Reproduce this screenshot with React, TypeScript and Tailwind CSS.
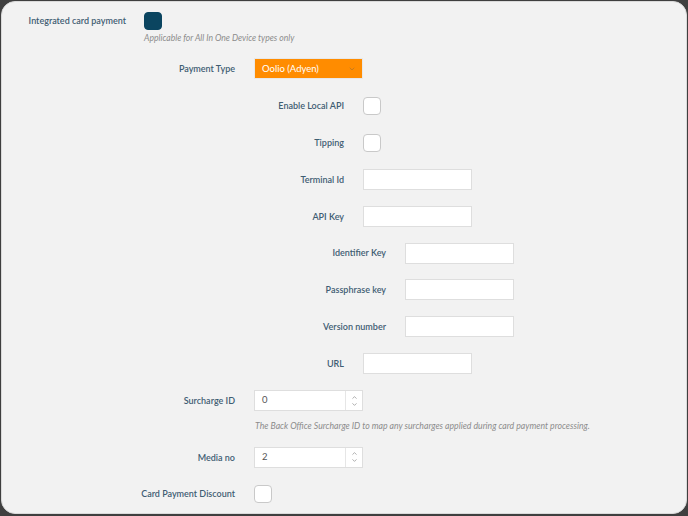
import { ChevronDown, ChevronUp } from 'lucide-react';
import type { ReactNode } from 'react';

function Row({
  labelClass,
  label,
  children,
}: {
  labelClass: string;
  label: string;
  children: ReactNode;
}) {
  return (
    <div className="flex h-[36.85px] items-center">
      <div className={`${labelClass} shrink-0 pr-[19px] text-right`}>{label}</div>
      {children}
    </div>
  );
}

function Checkbox({ checked = false }: { checked?: boolean }) {
  return (
    <div
      className={
        checked
          ? 'h-[18px] w-[18px] rounded-[4px] border border-[#0b4560] bg-[#0b4560]'
          : 'h-[18px] w-[18px] rounded-[4px] border border-[#c9c9c9] bg-white'
      }
    />
  );
}

function TextInput() {
  return <div className="h-[21px] w-[109px] border border-[#dedede] bg-white" />;
}

function NumberInput({ value }: { value: string }) {
  return (
    <div className="flex h-[21px] w-[109px] border border-[#dedede] bg-white">
      <div className="flex flex-1 items-center pl-[7px] text-[9.5px] font-normal text-[#555]">{value}</div>
      <div className="flex w-[17px] flex-col items-center justify-center border-l border-[#e6e6e6] text-[#777]">
        <ChevronUp size={7} strokeWidth={2} />
        <ChevronDown size={7} strokeWidth={2} />
      </div>
    </div>
  );
}

export default function App() {
  return (
    <div className="h-[516px] w-[688px] bg-[#3f3f3f] px-[1px] pt-[1px] pb-[2px] font-['Lato',sans-serif]">
      <div className="h-full w-full overflow-hidden rounded-[14px] border border-[#dadada] bg-[#f2f2f2] pt-[10px] text-[9px] font-semibold text-[#3f5d72]">
        <div className="flex h-[18px] items-center">
          <div className="w-[142px] shrink-0 pr-[18px] text-right">Integrated card payment</div>
          <Checkbox checked />
        </div>
        <div className="mt-[3px] pl-[142px] text-[8.6px] leading-[10px] font-normal italic text-[#8c8c8c]">
          Applicable for All In One Device types only
        </div>
        <div className="mt-[7.5px]">
          <Row labelClass="w-[252px]" label="Payment Type">
            <div className="flex h-[21px] w-[109px] items-center justify-between border border-[#e8e8e8] bg-[#ff8c00] pr-[6px] pl-[7px] text-[9.5px] font-normal text-white">
              <span>Oolio (Adyen)</span>
              <ChevronDown size={8} strokeWidth={1.5} className="text-[#8f6a3f]" />
            </div>
          </Row>
          <Row labelClass="w-[361px]" label="Enable Local API">
            <Checkbox />
          </Row>
          <Row labelClass="w-[361px]" label="Tipping">
            <Checkbox />
          </Row>
          <Row labelClass="w-[361px]" label="Terminal Id">
            <TextInput />
          </Row>
          <Row labelClass="w-[361px]" label="API Key">
            <TextInput />
          </Row>
          <Row labelClass="w-[403px]" label="Identifier Key">
            <TextInput />
          </Row>
          <Row labelClass="w-[403px]" label="Passphrase key">
            <TextInput />
          </Row>
          <Row labelClass="w-[403px]" label="Version number">
            <TextInput />
          </Row>
          <Row labelClass="w-[361px]" label="URL">
            <TextInput />
          </Row>
          <Row labelClass="w-[252px]" label="Surcharge ID">
            <NumberInput value="0" />
          </Row>
        </div>
        <div className="pl-[253px] text-[8.7px] leading-[14px] font-normal italic text-[#8c8c8c]">
          The Back Office Surcharge ID to map any surcharges applied during card payment processing.
        </div>
        <div className="mt-[6px]">
          <Row labelClass="w-[252px]" label="Media no">
            <NumberInput value="2" />
          </Row>
          <Row labelClass="w-[252px]" label="Card Payment Discount">
            <Checkbox />
          </Row>
        </div>
      </div>
    </div>
  );
}
